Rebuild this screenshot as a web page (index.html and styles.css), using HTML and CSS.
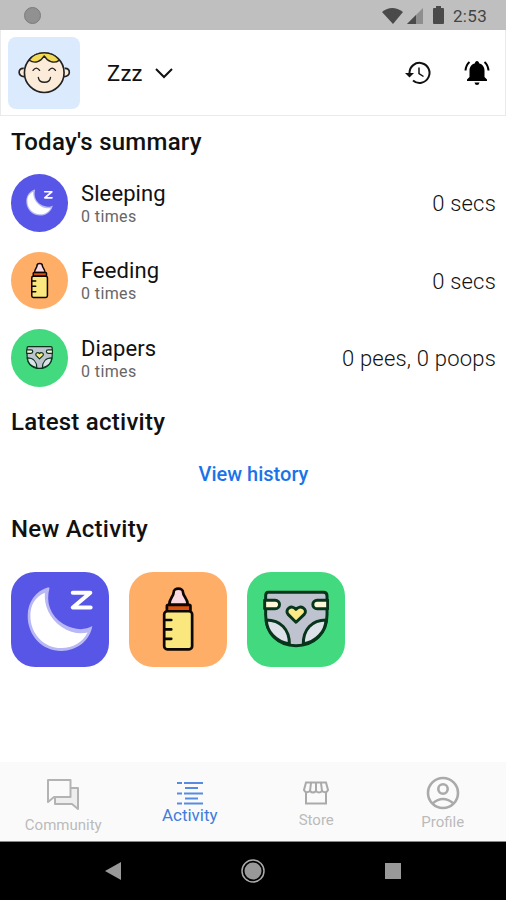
FILE: index.html
```html
<!DOCTYPE html>
<html lang="en">
<head>
  <meta charset="UTF-8">
  <title>Activity</title>
  <link rel="stylesheet" href="styles.css">
</head>
<body>
  <svg class="sprite">
    <symbol id="moon" viewBox="82 82 196 196">
      <path d="M145 86C108 97 84 130 84 171C84 230 128 275 184 275C230 275 269 244 276 201C255 214 222 214 190 195C151 171 137 130 149 88Z" fill="#b9b8f5"/>
      <path d="M135 102C105 115 92 140 92 170C92 225 133 266 184 266C218 266 247 250 262 220C240 226 210 221 184 203C149 178 132 140 135 102Z" fill="#fff"/>
      <path d="M218 102H270L218 146H271" fill="none" stroke="#fff" stroke-width="12" stroke-linecap="round" stroke-linejoin="round"/>
    </symbol>
    <symbol id="bottle" viewBox="74 82 196 196">
      <g stroke="#0d0702" stroke-width="8" stroke-linejoin="round" stroke-linecap="round">
        <path d="M146 138C146 118 159 113 159 101C159 86 187 86 187 101C187 113 201 118 201 138Z" fill="#fbd9e2"/>
        <rect x="139" y="138" width="70" height="19" rx="4" fill="#d9530f"/>
        <rect x="131" y="157" width="83" height="113" rx="9" fill="#fae77d"/>
        <path d="M132 183H152M132 211H152M132 239H152" fill="none"/>
      </g>
    </symbol>
    <symbol id="diaper" viewBox="82 78 200 200">
      <g stroke="#07351b" stroke-width="9" stroke-linejoin="round" stroke-linecap="round">
        <path d="M98 97H265Q276 97 276 108V165C276 222 236 259 182 259S90 222 90 165V108Q90 97 98 97Z" fill="#bfc3d0"/>
        <path d="M92 181C135 181 162 209 162 254C119 246 94 216 92 181ZM273 181C230 181 204 209 204 254C245 246 271 216 273 181Z" fill="#dde2e8"/>
        <path d="M87 121H119A13 13 0 0 1 119 147H87ZM278 121H246A13 13 0 0 0 246 147H278Z" fill="#fff8d8"/>
        <path d="M182 188L158 164C146 149 169 132 182 149C195 132 220 149 207 164Z" fill="#fbea86"/>
      </g>
    </symbol>
  </svg>

  <div class="status-bar">
    <span class="status-dot"></span>
    <svg class="status-icons" width="64" height="20" viewBox="0 0 64 20">
      <path d="M0 6Q10-2 21 6L11 18Z" fill="#4a4a4a"/>
      <path d="M41 2V18H25Z" fill="#8e8e8e"/>
      <path d="M34 9V18H25Z" fill="#4a4a4a"/>
      <path d="M54 0H59V2H61Q62 2 62 3V17Q62 18 61 18H52Q51 18 51 17V3Q51 2 52 2H54Z" fill="#4a4a4a"/>
    </svg>
    <span class="clock">2:53</span>
  </div>

  <header class="header">
    <svg class="avatar" viewBox="22 110 218 218">
      <g fill="#fcebd9" stroke="#222" stroke-width="5" stroke-linejoin="round">
        <path d="M69 205C50 203 50 231 71 230M193 205C212 203 212 231 190 230"/>
        <circle cx="131" cy="218" r="60"/>
        <path d="M85 180C96 163 110 158 131 158C153 158 166 165 177 180C160 193 141 184 131 167C120 184 104 193 85 180Z" fill="#f2d956" stroke-width="4"/>
        <path d="M97 211Q107 197 117 211M145 211Q155 197 165 211M113 232C116 252 147 252 150 232" fill="none" stroke-width="4" stroke-linecap="round"/>
      </g>
    </svg>
    <div class="baby">
      <span>Zzz</span>
      <svg width="18" height="11" viewBox="0 0 18 11"><path d="M1 1L9 9L17 1" fill="none" stroke="#111" stroke-width="2"/></svg>
    </div>
    <div class="actions">
      <svg width="26" height="24" viewBox="0 0 26 24">
        <g fill="none" stroke="#111" stroke-width="2">
          <path d="M4.500 13V12A10 10 0 1 1 8 19.500"/>
          <path d="M14 6.500V12.500L18.500 15.500" stroke-width="1.500"/>
        </g>
        <path d="M0 12H9L4.500 16.500Z" fill="#111"/>
      </svg>
      <svg width="26" height="26" viewBox="0 0 26 26">
        <path d="M13 1C14.200 1 15 2 15 3.200C18.500 4 20.500 7 20.500 10.500V17L23 19.500V21H3V19.500L5.500 17V10.500C5.500 7 7.500 4 11 3.200C11 2 11.800 1 13 1ZM10.500 22.500H15.500Q15 25 13 25T10.500 22.500Z" fill="#000"/>
        <path d="M5.500 2Q2 5 1.500 10.500M20.500 2Q24 5 24.500 10.500" fill="none" stroke="#000" stroke-width="2"/>
      </svg>
    </div>
  </header>

  <main class="content">
    <h2>Today's summary</h2>
    <ul class="summary">
      <li>
        <span class="circle purple"><svg class="small"><use href="#moon"/></svg></span>
        <div class="label"><strong>Sleeping</strong><small>0 times</small></div>
        <span class="value">0 secs</span>
      </li>
      <li>
        <span class="circle orange"><svg class="small bottle"><use href="#bottle"/></svg></span>
        <div class="label"><strong>Feeding</strong><small>0 times</small></div>
        <span class="value">0 secs</span>
      </li>
      <li>
        <span class="circle green"><svg class="small"><use href="#diaper"/></svg></span>
        <div class="label"><strong>Diapers</strong><small>0 times</small></div>
        <span class="value">0 pees, 0 poops</span>
      </li>
    </ul>

    <h2>Latest activity</h2>
    <a class="history" href="#">View history</a>

    <h2>New Activity</h2>
    <div class="tiles">
      <a class="tile purple" href="#"><svg class="large"><use href="#moon"/></svg></a>
      <a class="tile orange" href="#"><svg class="large"><use href="#bottle"/></svg></a>
      <a class="tile green" href="#"><svg class="large"><use href="#diaper"/></svg></a>
    </div>
  </main>

  <nav class="tabs">
    <a class="tab community" href="#">
      <svg width="34" height="32" viewBox="0 0 34 32">
        <g stroke="#b3b3b3" stroke-width="2" stroke-linejoin="round">
          <path d="M9 9H32V30L26 25H9Z" fill="#eee"/>
          <path d="M2 1H24.500V18H8L2 23Z" fill="#fafafa"/>
        </g>
      </svg>
      <span>Community</span>
    </a>
    <a class="tab active" href="#">
      <svg width="26" height="25" viewBox="0 0 26 25">
        <path d="M0 2H5M7 2H26M8 7H21M0 12.500H5M7 12.500H26M8 17.500H21M0 22.500H5M7 22.500H26" stroke="#568be0" stroke-width="2"/>
      </svg>
      <span>Activity</span>
    </a>
    <a class="tab store" href="#">
      <svg width="26" height="24" viewBox="0 0 26 24">
        <g fill="none" stroke="#aaa" stroke-width="2">
          <path d="M3 11V22.500H23V11M3 1.500H23L25 9Q23 13 19 10Q16 13 13 10Q10 13 7 10Q3 13 1 9Z"/>
          <path d="M8 2L7 10M13 2V10M18 2L19 10"/>
        </g>
      </svg>
      <span>Store</span>
    </a>
    <a class="tab profile" href="#">
      <svg width="34" height="34" viewBox="0 0 34 34">
        <g fill="none" stroke="#aaa" stroke-width="2.600">
          <circle cx="17" cy="17" r="15"/>
          <circle cx="17" cy="13" r="4.700"/>
          <path d="M6.500 27.500Q17 18.500 27.500 27.500"/>
        </g>
      </svg>
      <span>Profile</span>
    </a>
  </nav>

  <div class="nav-bar">
    <svg width="16" height="18" viewBox="0 0 16 18"><path d="M0 9L16 0V18Z" fill="#999"/></svg>
    <svg width="24" height="24" viewBox="0 0 24 24">
      <circle cx="12" cy="12" r="11" fill="none" stroke="#aaa" stroke-width="1.500"/>
      <circle cx="12" cy="12" r="8.500" fill="#999"/>
    </svg>
    <svg width="16" height="16" viewBox="0 0 16 16"><path d="M0 0H16V16H0Z" fill="#999"/></svg>
  </div>
</body>
</html>
```
FILE: styles.css
```css
* {
  box-sizing: border-box;
}
body {
  display: flex;
  flex-direction: column;
  height: 900px;
  margin: 0;
  background-color: #fff;
  color: #111;
  font-family: Roboto, sans-serif;
  overflow: hidden;
}
a {
  color: inherit;
  text-decoration: none;
}
svg {
  display: block;
  flex: none;
}
.sprite {
  display: none;
}
.purple {
  background-color: #5756e6;
}
.orange {
  background-color: #ffae68;
}
.green {
  background-color: #42d97f;
}

.status-bar {
  display: flex;
  align-items: center;
  height: 30px;
  padding: 0 19px 0 24px;
  background-color: #bfbfbf;
}
.status-dot {
  width: 17px;
  height: 17px;
  border: 1px solid #7b7b7b;
  border-radius: 50%;
  background-color: #919191;
}
.status-icons {
  margin: 2px 7px 0 auto;
}
.clock {
  padding-top: 2px;
  color: #444;
  font-size: 17px;
  letter-spacing: 0.3px;
}

.header {
  display: flex;
  align-items: center;
  height: 86px;
  padding: 0 15px 0 6.500px;
  border: 1px solid #eaeaea;
  border-top: 0;
}
.avatar {
  width: 72.500px;
  height: 72px;
  border-radius: 8px;
  background-color: #dbeafd;
}
.baby {
  display: flex;
  align-items: center;
  gap: 12px;
  margin-left: 27px;
  padding-top: 2px;
  font-size: 22px;
  letter-spacing: 0.2px;
}
.actions {
  display: flex;
  align-items: center;
  gap: 33px;
  margin-left: auto;
}

.content {
  flex: 1;
  padding: 12px 10px 0 11px;
}
h2 {
  margin: 0;
  font-size: 24px;
  font-weight: 500;
  line-height: 28px;
  letter-spacing: 0.25px;
}
.summary {
  display: flex;
  flex-direction: column;
  gap: 20px;
  margin: 18px 0 21px;
  padding: 0;
  list-style-type: none;
}
.summary li {
  display: flex;
  align-items: center;
}
.circle {
  display: flex;
  align-items: center;
  justify-content: center;
  width: 57px;
  height: 57.500px;
  border-radius: 50%;
}
.small {
  width: 27px;
  height: 27px;
}
.small.bottle {
  width: 37px;
  height: 37px;
}
.large {
  width: 66px;
  height: 66px;
}
.label {
  display: flex;
  flex-direction: column;
  margin-left: 13px;
  padding-top: 3px;
}
.label strong {
  font-size: 22px;
  font-weight: 400;
  line-height: 24px;
  letter-spacing: 0.1px;
}
.label small {
  color: #666;
  font-size: 16px;
  font-weight: 400;
  line-height: 21px;
  letter-spacing: 0.4px;
}
.value {
  margin-left: auto;
  padding-top: 2px;
  font-size: 22px;
  font-weight: 300;
  letter-spacing: 0.2px;
}
.history {
  display: block;
  margin: 27px 0 29px;
  color: #1a73e8;
  font-size: 20px;
  font-weight: 500;
  line-height: 23px;
  text-align: center;
}
.tiles {
  display: flex;
  gap: 20px;
  margin-top: 29px;
}
.tile {
  display: flex;
  align-items: center;
  justify-content: center;
  width: 98px;
  height: 95px;
  border-radius: 24px;
}
.tile .large {
  margin-right: 1px;
}

.tabs {
  display: flex;
  height: 80px;
  border-bottom: 1px solid #888;
  background-color: #fafafa;
}
.tab {
  display: flex;
  flex: 1;
  flex-direction: column;
  align-items: center;
  color: #bbb;
  font-size: 15px;
  line-height: 18px;
}
.community {
  gap: 5px;
  padding-top: 17px;
}
.active {
  padding-top: 19px;
  color: #3f7ddb;
  font-size: 17px;
}
.store {
  gap: 6px;
  padding-top: 19px;
}
.profile {
  gap: 3px;
  padding-top: 14px;
}

.nav-bar {
  display: flex;
  align-items: center;
  justify-content: center;
  gap: 120px;
  height: 58px;
  background-color: #000;
}
```
